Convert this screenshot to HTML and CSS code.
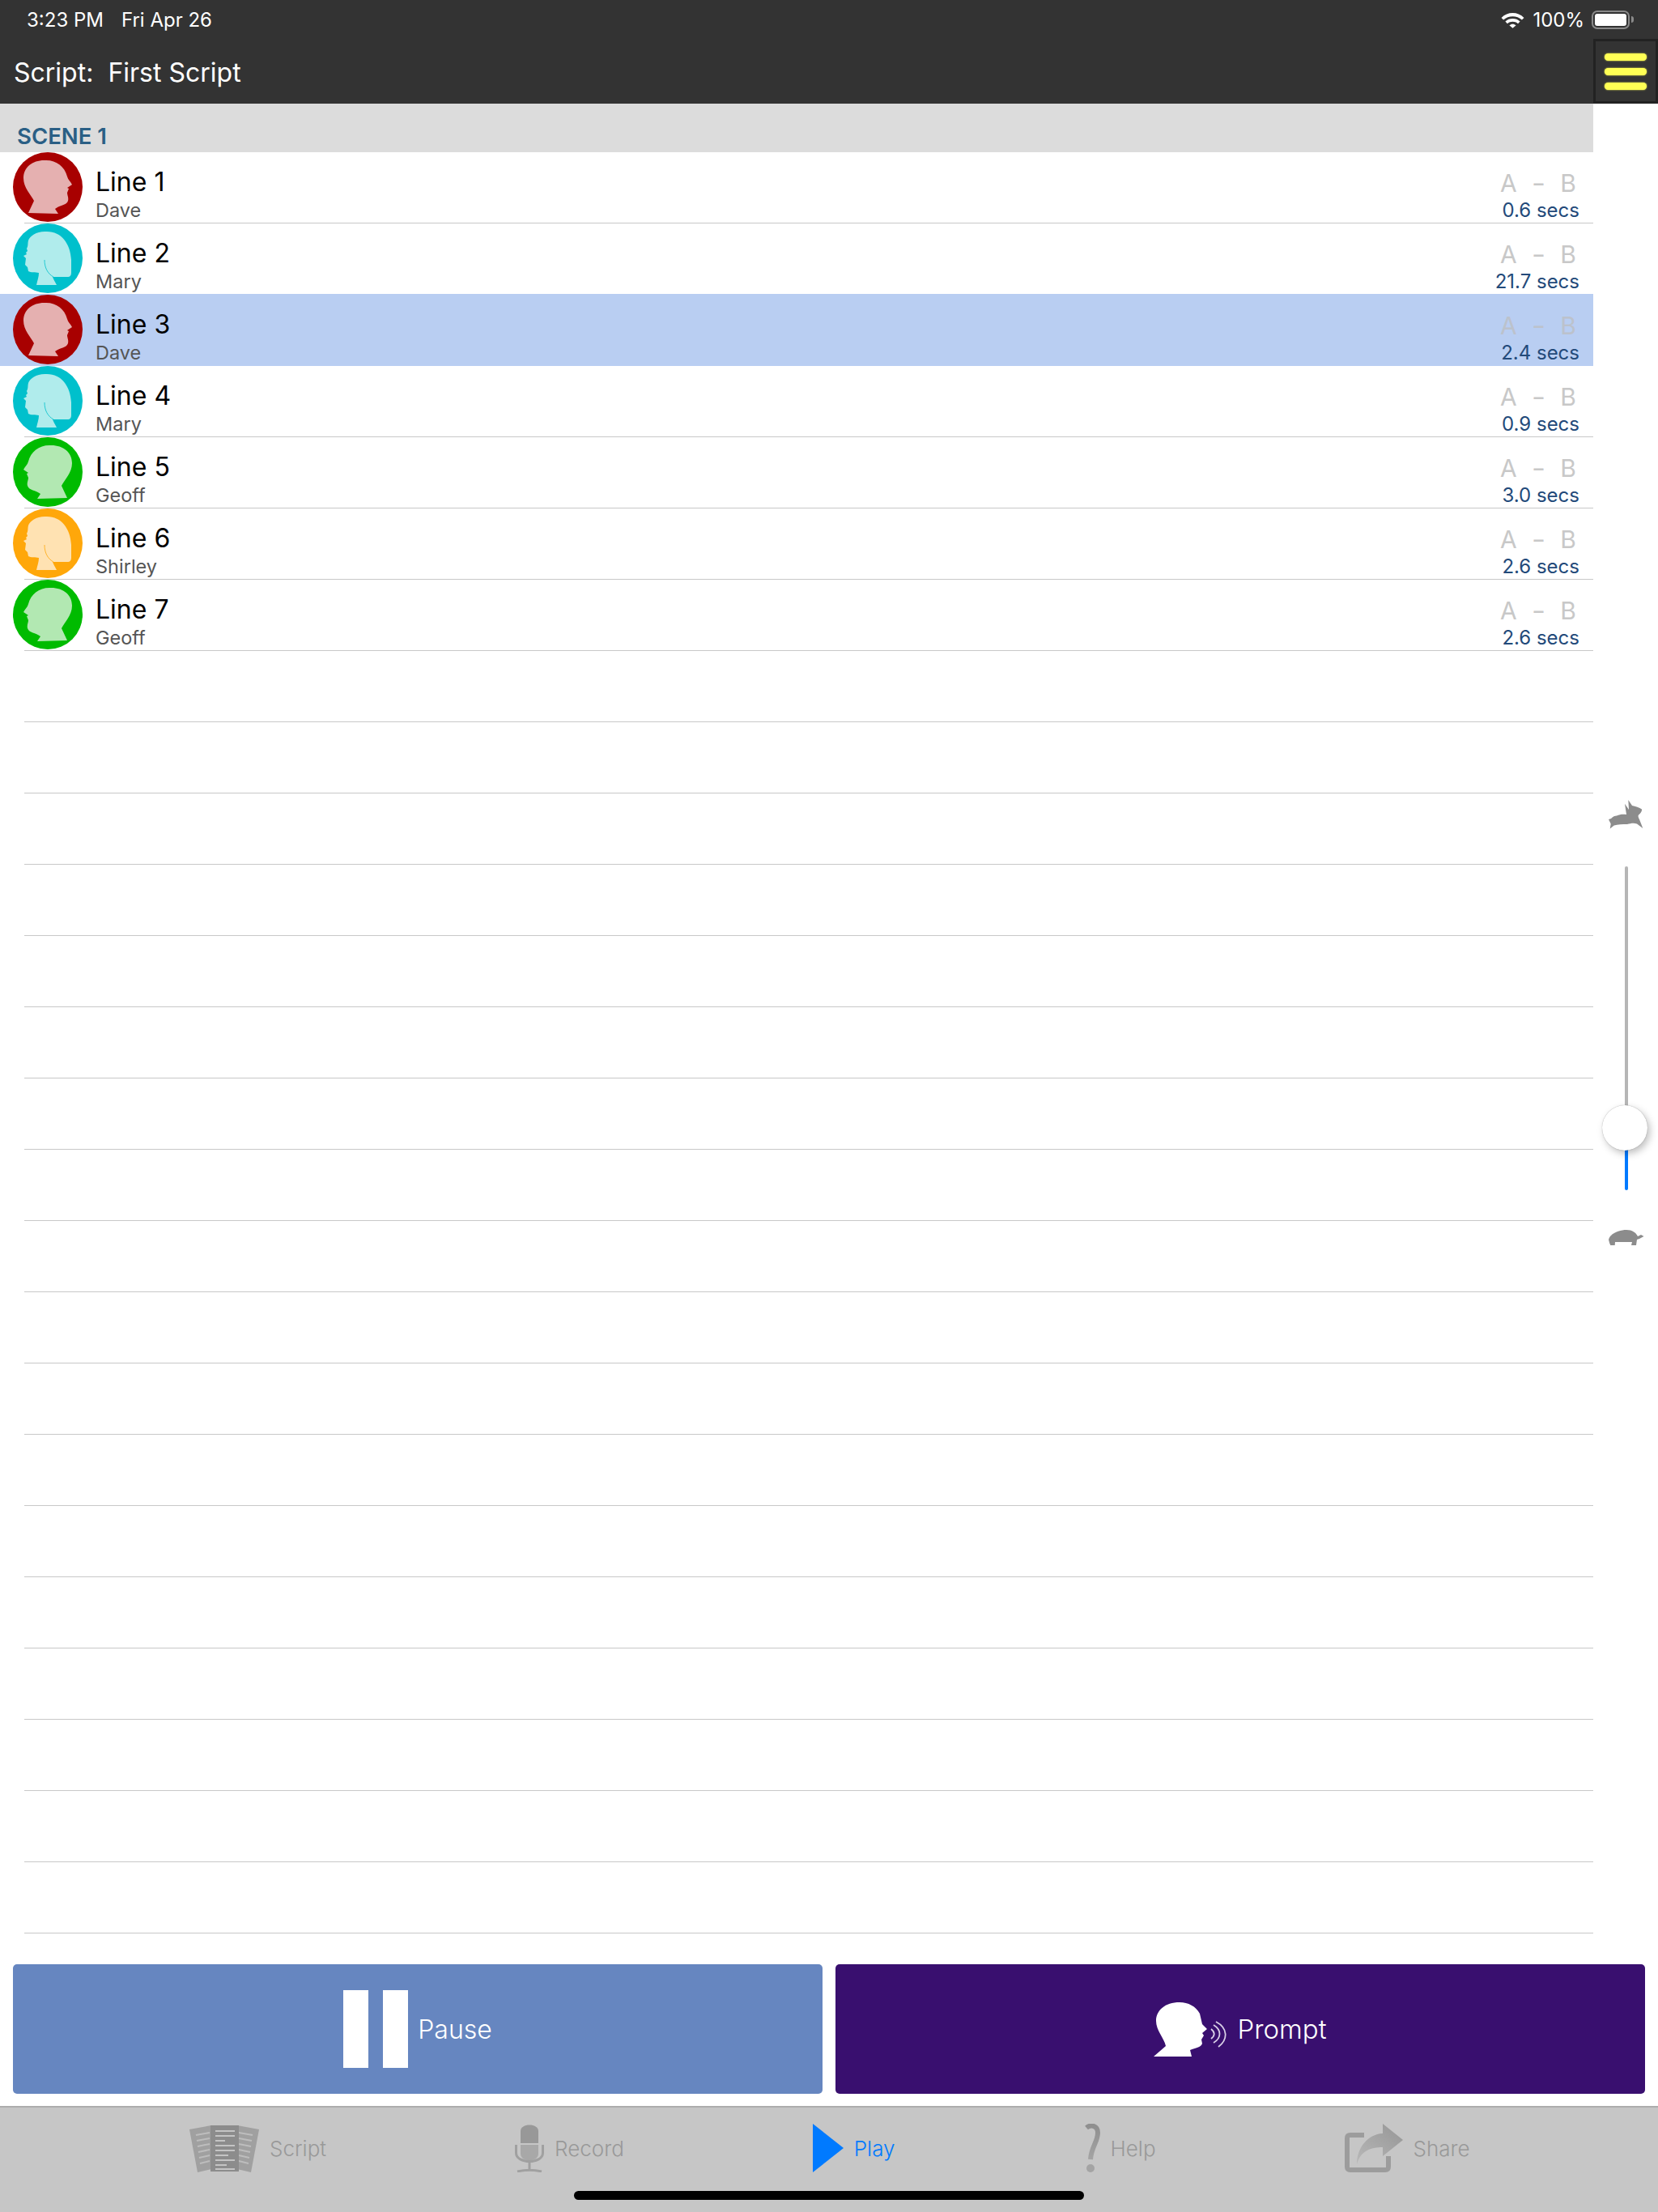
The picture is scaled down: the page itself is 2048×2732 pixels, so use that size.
FILE: index.html
```html
<!DOCTYPE html>
<html lang="en">
<head>
    <meta charset="UTF-8">
    <meta name="viewport" content="width=device-width, initial-scale=1.0">
    <title>Script: First Script</title>
    <link rel="stylesheet" href="styles.css">
</head>
<body>
    <svg class="defs" width="0" height="0">
        <defs>
            <symbol id="headMale" viewBox="0 0 86 86">
                <path d="M41 10C25 9 13 18 13 32C13 44 22 52 26 60L19 75L56 76L52 70C58 65 66 66 68 60C69 56 67 53 67 50L69 45L67 44L73 40C71 36 68 34 67 30C64 18 54 10 41 10Z"/>
            </symbol>
            <symbol id="headFemale" viewBox="0 0 86 86">
                <path d="M42 10C30 9 21 15 19 21C18 25 19 28 17 31L18 34L16 36L17 38L13 40L16 43L15 51L18 54L19 59C22 61 28 60 32 61C32 66 30 71 29 76L54 76C52 72 50 69 49 66L67 66C71 66 72 64 72 60L72 45C71 25 60 10 42 10Z"/>
            </symbol>
            <linearGradient id="tabGrey" x1="0" y1="0" x2="0" y2="1">
                <stop offset="0" stop-color="#8f8f8f"/>
                <stop offset="1" stop-color="#a4a4a4"/>
            </linearGradient>
            <linearGradient id="shareGrey" x1="0" y1="1" x2="1" y2="0">
                <stop offset="0" stop-color="#b8b8b8"/>
                <stop offset="1" stop-color="#959595"/>
            </linearGradient>
        </defs>
    </svg>

    <div class="app">
        <header class="topBar">
            <div class="statusRow">
                <span class="statusTime">3:23 PM</span>
                <span class="statusDate">Fri Apr 26</span>
                <svg class="wifi" viewBox="0 0 28 20" width="29" height="21">
                    <path d="M0.5 7.5C8 0 20 0 27.5 7.5L25 10C19 4.5 9 4.5 3 10Z"/>
                    <path d="M5.2 12C10 7.5 18 7.5 22.800 12L20.300 14.500C16.500 11.500 11.500 11.500 7.700 14.500Z"/>
                    <path d="M10 16.500C12.500 14.500 15.500 14.500 18 16.500L14 20Z"/>
                </svg>
                <span class="statusBattery">100%</span>
                <span class="battery"><span class="batteryFill"></span></span>
                <span class="batteryNub"></span>
            </div>
            <div class="navRow">
                <div class="navTitle">Script:&nbsp; First Script</div>
                <div class="menuButton">
                    <span class="menuBar"></span>
                    <span class="menuBar"></span>
                    <span class="menuBar"></span>
                </div>
            </div>
        </header>

        <main class="middle">
            <section class="list">
                <div class="sceneHeader">SCENE 1</div>

                <div class="row">
                    <div class="avatar dave"><svg><use href="#headMale"/></svg></div>
                    <div class="lineText"><div class="lineName">Line 1</div><div class="actor">Dave</div></div>
                    <div class="lineInfo"><div class="ab"><span>A</span><span class="dash">–</span><span>B</span></div><div class="secs">0.6 secs</div></div>
                </div>
                <div class="row noRule">
                    <div class="avatar mary"><svg><use href="#headFemale"/><path class="hairLine" d="M39 45C39 55 43 62 50 66"/></svg></div>
                    <div class="lineText"><div class="lineName">Line 2</div><div class="actor">Mary</div></div>
                    <div class="lineInfo"><div class="ab"><span>A</span><span class="dash">–</span><span>B</span></div><div class="secs">21.7 secs</div></div>
                </div>
                <div class="row selected">
                    <div class="avatar dave"><svg><use href="#headMale"/></svg></div>
                    <div class="lineText"><div class="lineName">Line 3</div><div class="actor">Dave</div></div>
                    <div class="lineInfo"><div class="ab"><span>A</span><span class="dash">–</span><span>B</span></div><div class="secs">2.4 secs</div></div>
                </div>
                <div class="row">
                    <div class="avatar mary"><svg><use href="#headFemale"/><path class="hairLine" d="M39 45C39 55 43 62 50 66"/></svg></div>
                    <div class="lineText"><div class="lineName">Line 4</div><div class="actor">Mary</div></div>
                    <div class="lineInfo"><div class="ab"><span>A</span><span class="dash">–</span><span>B</span></div><div class="secs">0.9 secs</div></div>
                </div>
                <div class="row">
                    <div class="avatar geoff"><svg class="flip"><use href="#headMale"/></svg></div>
                    <div class="lineText"><div class="lineName">Line 5</div><div class="actor">Geoff</div></div>
                    <div class="lineInfo"><div class="ab"><span>A</span><span class="dash">–</span><span>B</span></div><div class="secs">3.0 secs</div></div>
                </div>
                <div class="row">
                    <div class="avatar shirley"><svg><use href="#headFemale"/><path class="hairLine" d="M39 45C39 55 43 62 50 66"/></svg></div>
                    <div class="lineText"><div class="lineName">Line 6</div><div class="actor">Shirley</div></div>
                    <div class="lineInfo"><div class="ab"><span>A</span><span class="dash">–</span><span>B</span></div><div class="secs">2.6 secs</div></div>
                </div>
                <div class="row">
                    <div class="avatar geoff"><svg class="flip"><use href="#headMale"/></svg></div>
                    <div class="lineText"><div class="lineName">Line 7</div><div class="actor">Geoff</div></div>
                    <div class="lineInfo"><div class="ab"><span>A</span><span class="dash">–</span><span>B</span></div><div class="secs">2.6 secs</div></div>
                </div>

                <div class="row"></div><div class="row"></div><div class="row"></div>
                <div class="row"></div><div class="row"></div><div class="row"></div>
                <div class="row"></div><div class="row"></div><div class="row"></div>
                <div class="row"></div><div class="row"></div><div class="row"></div>
                <div class="row"></div><div class="row"></div><div class="row"></div>
                <div class="row"></div><div class="row"></div><div class="row"></div>
            </section>

            <aside class="speedPanel">
                <svg class="rabbit" viewBox="0 0 43 37" width="43" height="37">
                    <path d="M24.300 1L29 8C33 9 38 10 41 12.600C41.500 15 39 18 37 19.500C36 21 37 23 38 25L42.300 36L35 30.500C31 29 27 30 23 31C17 31 11 31 6.700 32.600L1.700 36.400L2.700 30.600L0 25L3 24C5 21.500 8 20.500 10 20.500C14 18.500 18 18.500 22 19L20 5.700L25 13Z"/>
                </svg>
                <div class="speedTrack">
                    <div class="trackGrey"></div>
                    <div class="trackBlue"></div>
                    <div class="thumb"></div>
                </div>
                <svg class="tortoise" viewBox="0 0 44 19" width="44" height="19">
                    <path d="M0 12C2 4 14 0 22 0C30 0 34 4 36 8L40 6L43.500 8L38 11L35 12L34 19L28 19L29 15L8 15L7.700 19L2.300 19L1 16Z"/>
                </svg>
            </aside>
        </main>

        <div class="actions">
            <div class="bigButton pauseButton">
                <span class="pauseIcon"><span class="pauseBar"></span><span class="pauseBar"></span></span>
                <span class="pauseLabel">Pause</span>
            </div>
            <div class="bigButton promptButton">
                <svg class="promptIcon" viewBox="0 0 90 68" width="90" height="68">
                    <path class="promptHead" d="M32 0C14 0 3 10 3 23C3 35 13 44 15 54L0 67L47 67L45 59C52 56 58 56 60 51L59 46L62 41L60 38L66 33L60 27L57 14C52 5 43 0 32 0Z"/>
                    <path class="promptWave" d="M71 33C76 37 76 41 71 45"/>
                    <path class="promptWave" d="M74 28C84 34 84 44 74 50"/>
                    <path class="promptWave" d="M77 24C92 32 92 46 80 55"/>
                </svg>
                <span class="promptLabel">Prompt</span>
            </div>
        </div>

        <nav class="tabBar">
            <div class="tab">
                <svg class="tabIcon" viewBox="0 0 86 60" width="86" height="60">
                    <path class="sheetSide" d="M0 7L27 2L27 56L10 60Z"/>
                    <path class="sheetSide" d="M86 7L59 2L59 56L76 60Z"/>
                    <path class="sheetLineSide" d="M8 14L25 11M9 21L25 18M10 28L25 25M11 35L25 32M12 42L25 39M13 49L25 46M61 11L78 14M61 18L77 21M61 25L76 28M61 32L75 35M61 39L74 42M61 46L73 49"/>
                    <rect class="sheetMain" x="26" y="2" width="35" height="57"/>
                    <path class="sheetLine" d="M32 9H56M32 15H56M32 21H44M32 27H56M32 33H56M32 39H48M32 45H56M32 51H46M32 56H56"/>
                </svg>
                <span class="tabLabel">Script</span>
            </div>
            <div class="tab">
                <svg class="tabIcon" viewBox="0 0 36 60" width="36" height="60">
                    <path class="micTop" d="M7 24V9C7 -1 29 -1 29 9V24Z"/>
                    <path class="micBody" d="M7 26H29V37C29 48 7 48 7 37Z"/>
                    <path class="micCradle" d="M1.500 26V36C1.500 50 34.500 50 34.500 36V26"/>
                    <path class="micCradle" d="M18 47V56M3 59C12 57 24 57 33 59"/>
                </svg>
                <span class="tabLabel">Record</span>
            </div>
            <div class="tab tabActive">
                <svg class="tabIcon" viewBox="0 0 38 60" width="38" height="60">
                    <path class="playShape" d="M0 0L38 30L0 60Z"/>
                </svg>
                <span class="tabLabel">Play</span>
            </div>
            <div class="tab">
                <svg class="tabIcon" viewBox="0 0 20 60" width="20" height="60">
                    <path class="helpStroke" d="M3 5C9 0 17 3 17 11C17 23 9 28 8 44"/>
                    <circle class="helpDot" cx="8" cy="55" r="5"/>
                </svg>
                <span class="tabLabel">Help</span>
            </div>
            <div class="tab">
                <svg class="tabIcon" viewBox="0 0 72 60" width="72" height="60">
                    <path class="shareBox" d="M24 14H7C4 14 3 15 3 18V53C3 56 4 57 7 57H50C53 57 54 56 54 53V40"/>
                    <path class="shareArrow" d="M47 0L72 20L47 40V29C32 29 20 33 15 50C15 30 28 13 47 12Z"/>
                </svg>
                <span class="tabLabel">Share</span>
            </div>
            <div class="homeIndicator"></div>
        </nav>
    </div>
</body>
</html>
```

FILE: styles.css
```css
html, body {
    margin: 0;
    padding: 0;
    background: #fff;
}
body {
    font-family: Inter, 'Liberation Sans', Arial, sans-serif;
}
.defs {
    position: absolute;
}
.app {
    width: 2048px;
    height: 2732px;
    display: flex;
    flex-direction: column;
    overflow: hidden;
}

/* top bar */
.topBar {
    height: 128px;
    background: #333;
    color: #fff;
    flex-shrink: 0;
}
.statusRow {
    height: 48px;
    display: flex;
    align-items: center;
    padding-left: 33px;
    font-size: 24px;
}
.statusDate {
    margin-left: 22px;
    flex: 1;
}
.wifi {
    fill: #fff;
}
.statusBattery {
    margin-left: 10px;
}
.battery {
    margin-left: 9px;
    width: 47px;
    height: 23px;
    box-sizing: border-box;
    border: 2px solid #8a8a8a;
    border-radius: 7px;
    padding: 2px;
    display: flex;
}
.batteryFill {
    flex: 1;
    background: #fff;
    border-radius: 3px;
}
.batteryNub {
    width: 3px;
    height: 8px;
    margin-left: 2px;
    margin-right: 30px;
    background: #8a8a8a;
    border-radius: 0 3px 3px 0;
}
.navRow {
    height: 80px;
    display: flex;
    align-items: center;
    justify-content: space-between;
    padding-left: 17px;
}
.navTitle {
    font-size: 32px;
    margin-top: 2px;
}
.menuButton {
    width: 80px;
    height: 80px;
    box-sizing: border-box;
    border: 3px solid #222;
    display: flex;
    flex-direction: column;
    align-items: center;
    justify-content: center;
    gap: 9px;
}
.menuBar {
    width: 52px;
    height: 9px;
    border-radius: 5px;
    background: #ffff55;
    box-shadow: 0 0 2px #ffff55;
}

/* list */
.middle {
    flex: 1;
    display: flex;
}
.list {
    width: 1968px;
}
.sceneHeader {
    height: 60px;
    box-sizing: border-box;
    background: #dcdcdc;
    color: #2a5f85;
    font-size: 27.5px;
    font-weight: 600;
    line-height: 26px;
    padding: 27px 0 0 21px;
}
.row {
    height: 88px;
    box-sizing: border-box;
    display: flex;
    align-items: stretch;
    background: linear-gradient(#c8c8c8, #c8c8c8) 30px 100% / 100% 1px no-repeat;
}
.row.noRule {
    background: none;
}
.row.selected {
    background: #b9cef2;
    box-shadow: 0 -1px 0 #b9cef2;
}
.avatar {
    width: 86px;
    height: 86px;
    margin: 0 0 0 16px;
    border-radius: 50%;
    flex-shrink: 0;
}
.avatar svg {
    display: block;
    width: 86px;
    height: 86px;
}
.avatar svg.flip {
    transform: scaleX(-1);
}
.hairLine {
    fill: none;
    stroke-width: 0.8;
}
.dave {
    background: #a80000;
    fill: #e5b0b0;
}
.mary {
    background: #00c0cc;
    fill: #b0ecec;
    stroke: #00c0cc;
}
.geoff {
    background: #00bb00;
    fill: #b2e8b2;
}
.shirley {
    background: #ffa70a;
    fill: #ffe2b2;
    stroke: #ffa70a;
}
.mary use, .shirley use {
    stroke: none;
}
.lineText {
    flex: 1;
    margin-left: 16px;
    padding-top: 17px;
}
.lineName {
    font-size: 32px;
    line-height: 40px;
    color: #000;
}
.actor {
    font-size: 23.5px;
    line-height: 30px;
    color: #555;
}
.lineInfo {
    width: 120px;
    padding: 21px 17px 0 0;
    text-align: right;
}
.ab {
    display: flex;
    justify-content: space-between;
    width: 94px;
    margin-left: auto;
    margin-right: 4px;
    font-size: 30px;
    line-height: 34px;
    color: #c8c8c8;
}
.selected .ab {
    color: #bcc2cc;
}
.dash {
    transform: scaleX(0.8);
}
.secs {
    font-size: 24px;
    line-height: 30px;
    margin-top: 2px;
    color: #234a7a;
    white-space: nowrap;
}

/* speed slider */
.speedPanel {
    width: 80px;
    display: flex;
    flex-direction: column;
    padding: 859px 0 0 19px;
    box-sizing: border-box;
}
.tortoise, .rabbit {
    fill: #8c8c8c;
    flex-shrink: 0;
}
.speedTrack {
    position: relative;
    width: 4px;
    height: 400px;
    margin: 46px 0 49px 20px;
    display: flex;
    flex-direction: column;
}
.trackGrey {
    flex: 1;
    background: #b6b6b6;
    border-radius: 2px 2px 0 0;
}
.trackBlue {
    height: 70px;
    background: #007aff;
    border-radius: 0 0 2px 2px;
}
.thumb {
    position: absolute;
    left: -28px;
    top: 295px;
    width: 56px;
    height: 56px;
    border-radius: 50%;
    background: #fff;
    box-shadow: 0 0 1px rgba(0, 0, 0, 0.4), 3px 4px 10px rgba(0, 0, 0, 0.25);
}

/* big buttons */
.actions {
    display: flex;
    gap: 16px;
    padding: 0 16px 15px;
}
.bigButton {
    flex: 1;
    height: 160px;
    border-radius: 5px;
    display: flex;
    align-items: center;
    justify-content: center;
    color: #fff;
    font-size: 32px;
    font-weight: 300;
}
.pauseButton {
    background: #6686c0;
}
.promptButton {
    background: #390f6f;
}
.pauseIcon {
    display: flex;
    gap: 18px;
    margin-right: 12px;
}
.pauseBar {
    width: 31px;
    height: 96px;
    background: #fff;
}
.promptIcon {
    margin-right: 13px;
    margin-top: 2px;
}
.promptHead {
    fill: #fff;
}
.promptWave {
    fill: none;
    stroke: #d8cfe6;
    stroke-width: 1.8;
}
.promptLabel {
    font-size: 33px;
}

/* tab bar */
.tabBar {
    position: relative;
    height: 131px;
    box-sizing: border-box;
    flex-shrink: 0;
    background: #c6c6c6;
    border-top: 2px solid #adadad;
    display: flex;
    gap: 233px;
    padding: 20px 0 0 234px;
}
.tab {
    display: flex;
    align-items: center;
    height: 60px;
    gap: 13px;
    color: #999;
}
.tabLabel {
    font-size: 26px;
    font-weight: 300;
}
.tabActive {
    color: #007aff;
}
.sheetSide {
    fill: #a0a0a0;
}
.sheetLineSide {
    stroke: #bdbdbd;
    stroke-width: 2;
    fill: none;
}
.sheetMain {
    fill: #8c8c8c;
}
.sheetLine {
    stroke: #c4c4c4;
    stroke-width: 2;
    fill: none;
}
.micTop {
    fill: #989898;
}
.micBody {
    fill: #a8a8a8;
}
.micCradle {
    fill: none;
    stroke: #a0a0a0;
    stroke-width: 3;
}
.playShape {
    fill: #007aff;
}
.helpStroke {
    fill: none;
    stroke: url(#tabGrey);
    stroke-width: 6;
}
.helpDot {
    fill: #a4a4a4;
}
.shareBox {
    fill: none;
    stroke: #9c9c9c;
    stroke-width: 6;
}
.shareArrow {
    fill: url(#shareGrey);
}
.homeIndicator {
    position: absolute;
    left: 709px;
    top: 103px;
    width: 630px;
    height: 11px;
    border-radius: 6px;
    background: #000;
}
```
